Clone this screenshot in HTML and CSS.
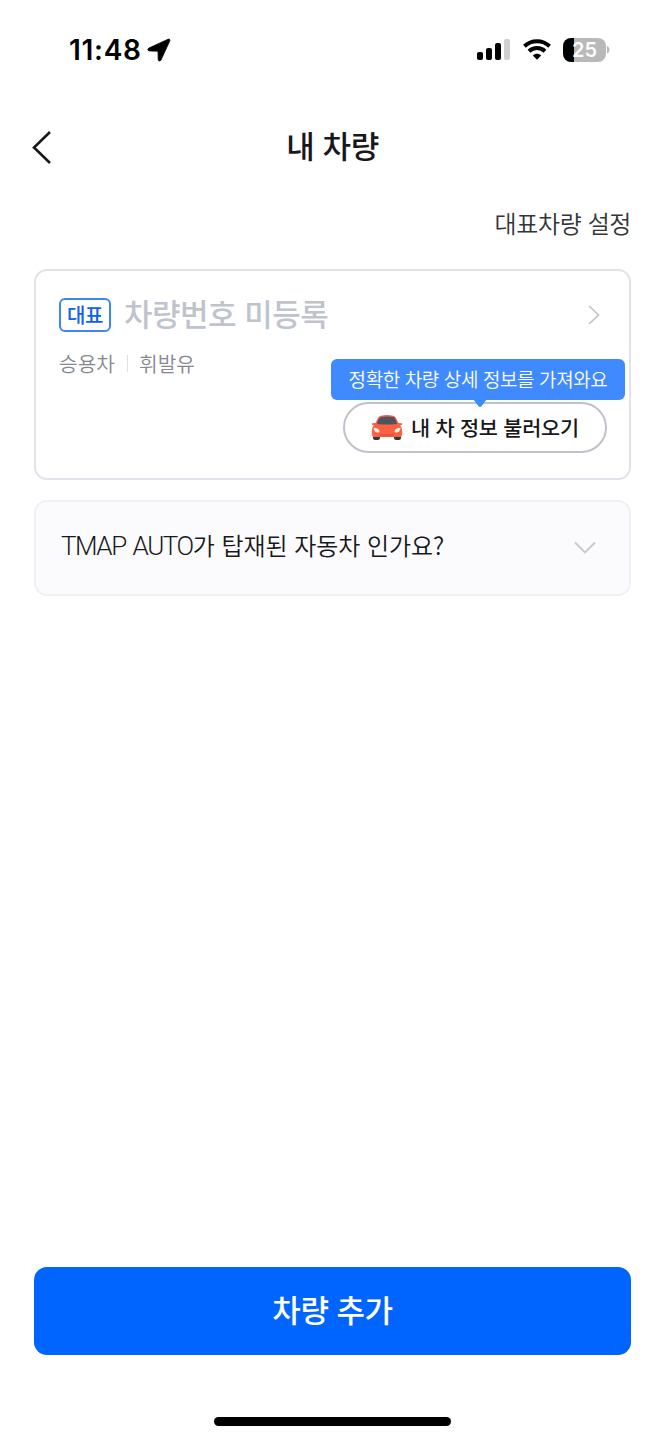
FILE: index.html
```html
<!DOCTYPE html>
<html lang="ko">
<head>
<meta charset="utf-8">
<title>내 차량</title>
<link rel="stylesheet" href="styles.css">
</head>
<body>
<div class="screen">
  <div class="status">
    <span class="time">11:48</span>
    <svg class="location" width="24" height="24" viewBox="0 0 24 24"><path d="M21.200 1.200 2 10c-1.800.9-1.300 2.800.4 2.900l8.600.3.2 8.300c.1 1.700 2 2.100 2.800.5L22.800 2.800c.5-1.100-.5-2.100-1.600-1.600z" stroke="#000" stroke-width=".8"/></svg>
    <div class="status-icons">
      <svg width="34" height="22" viewBox="0 0 34 22"><rect x="0" y="13" width="6" height="8" rx="2"/><rect x="9" y="9" width="6" height="12" rx="2"/><rect x="18" y="4" width="6" height="17" rx="2"/><rect x="27" y="0" width="6" height="21" rx="2" fill="#d0d0d0"/></svg>
      <svg class="wifi" width="28" height="22" viewBox="0 0 28 22"><g fill="none" stroke="#000" stroke-width="4"><path d="M1.400 7.200a18.300 18.300 0 0 1 25.200 0"/><path d="M6 12.200a11.700 11.700 0 0 1 16 0"/></g><path d="M9.800 16.400c2.400-2.100 6-2.100 8.400 0L14 20.800z"/></svg>
      <div class="battery"><span class="level">25</span></div>
      <svg class="cap" width="3" height="8" viewBox="0 0 3 8"><path d="M0 0c3.300 1 3.300 6.500 0 7.500z" fill="#b9b9b9"/></svg>
    </div>
  </div>
  <header class="header">
    <svg class="back" width="22" height="36" viewBox="0 0 22 36"><path d="M19 3 3 18.500 19 34" fill="none" stroke="#18181b" stroke-width="2.600"/></svg>
    <h1 class="title">내 차량</h1>
  </header>
  <div class="setting">대표차량 설정</div>
  <section class="card">
    <div class="row">
      <span class="badge">대표</span>
      <span class="plate">차량번호 미등록</span>
      <svg class="next" width="14" height="22" viewBox="0 0 14 22"><path d="m2 2 9.500 9L2 20" fill="none" stroke="#c0c4cb" stroke-width="1.700"/></svg>
    </div>
    <div class="meta"><span>승용차</span><i class="divider"></i><span>휘발유</span></div>
    <div class="load">
      <svg class="car" width="32" height="26" viewBox="0 0 32 26"><path d="M2 19h7v4q0 2-2 2H4q-2 0-2-2zm21 0h7v4q0 2-2 2h-3q-2 0-2-2z" fill="#36383d"/><path d="M4.500 8 7 3q1-2 3-2.300 6-1.200 12 0 2 .3 3 2.300l2.500 5 3 .2c1 .1 1 1.500 0 1.700l-1.300.4q2 2 2 6.700 0 5-2 5H2.800q-2 0-2-5 0-4.700 2-6.700l-1.300-.4c-1-.2-1-1.600 0-1.700z" fill="#fb6045"/><path d="M6 9q1.300-6 4-7 6-1.200 12 0 2.700 1 4 7-10 1-20 0z" fill="#50545c"/><path d="M2.500 12.800q5 .2 6 3.200.2 2-2.500 1.500-3-.5-3.500-4.700zm27 0q-5 .2-6 3.200-.2 2 2.500 1.500 3-.5 3.500-4.700z" fill="#fff3e6"/><path d="M8 18.500q8 1 16 0l-1.500 3h-13z" fill="#e95340"/></svg>
      <span class="load-text">내 차 정보 불러오기</span>
      <div class="tip">정확한 차량 상세 정보를 가져와요<svg class="arrow" width="14" height="9" viewBox="0 0 14 9"><path d="M0 0h14L8.500 7.300q-1.500 1.500-3 0z" fill="#3f8aff"/></svg></div>
    </div>
  </section>
  <section class="faq">
    <span class="question"><span class="latin">TMAP AUTO</span>가 탑재된 자동차 인가요?</span>
    <svg width="24" height="14" viewBox="0 0 24 14"><path d="m2 1.500 10 10 10-10" fill="none" stroke="#c5c9d0" stroke-width="1.900"/></svg>
  </section>
  <div class="add">차량 추가</div>
  <div class="home"></div>
</div>
</body>
</html>
```
FILE: styles.css
```css
* { box-sizing: border-box; }
body { margin: 0; background: #fff; font-family: "Noto Sans CJK KR", sans-serif; color: #18181b; white-space: nowrap; }
svg { display: block; flex: none; }
.screen { display: flex; flex-direction: column; height: 1440px; padding: 0 34px; }
.status { display: flex; align-items: center; height: 100px; padding-left: 35px; color: #000; }
.time { font: 600 28px/34px Inter, sans-serif; letter-spacing: .7px; }
.location { margin-left: 5px; }
.status-icons { display: flex; align-items: center; margin-left: auto; padding-right: 21px; }
.wifi { margin-left: 12px; }
.battery { width: 43px; height: 24px; margin-left: 12px; border-radius: 8px; background: linear-gradient(to right, #000 11px, #b9b9b9 11px); color: #fff; text-align: center; }
.level { font: 600 20px/24px Inter, sans-serif; }
.cap { margin-left: 1px; }
.header { display: grid; height: 94px; align-items: center; }
.back, .title { grid-area: 1 / 1; }
.back { margin-left: -3px; }
.title { margin: 0 0 5px; text-align: center; font-size: 31px; line-height: 44px; font-weight: 500; letter-spacing: -.4px; }
.setting { height: 75px; line-height: 57px; text-align: right; font-size: 24px; font-weight: 350; letter-spacing: -.4px; color: #333539; }
.card { height: 211px; border: 2px solid #e2e3e9; border-radius: 13px; padding: 26px 22px 0 23px; }
.row { display: flex; align-items: center; height: 36px; }
.badge { width: 52px; height: 34px; border: 2px solid #3d86f5; border-radius: 6px; color: #0e62ec; font-size: 20px; font-weight: 500; line-height: 29px; letter-spacing: -.3px; text-align: center; }
.plate { margin: -4px 0 0 13px; font-size: 31px; font-weight: 500; line-height: 36px; letter-spacing: -.5px; color: #bfc4cc; }
.next { margin-left: auto; margin-right: 6px; }
.meta { display: flex; align-items: center; height: 30px; margin-top: 15px; font-size: 20.300px; font-weight: 350; color: #85888f; }
.divider { width: 1px; height: 17px; margin: 0 11px 0 12px; background: #dddfe4; }
.load { position: relative; display: flex; align-items: center; width: 264px; height: 51px; margin: 24px 0 0 auto; padding-left: 26px; border: 2px solid #bfc2ca; border-radius: 26px; }
.load-text { margin: -2px 0 0 8px; font-size: 20.800px; font-weight: 500; line-height: 46px; letter-spacing: -.25px; }
.tip { position: absolute; right: -20px; bottom: 51px; width: 294px; height: 41px; border-radius: 6px; background: #3f8aff; color: #fff; text-align: center; font-size: 19px; font-weight: 350; line-height: 39px; letter-spacing: -.4px; }
.arrow { position: absolute; left: 142px; top: 40px; }
.faq { display: flex; align-items: center; justify-content: space-between; height: 96px; margin-top: 20px; padding: 0 32px 0 25px; border: 2px solid #f0f1f4; border-radius: 13px; background: #fbfbfe; }
.question { margin-top: -6px; font-size: 24px; font-weight: 350; line-height: 40px; letter-spacing: -.05px; }
.latin { font-family: Roboto, sans-serif; font-size: 26px; font-weight: 350; letter-spacing: -1.450px; word-spacing: 2px; }
.add { height: 88px; margin-top: auto; border-radius: 13px; background: #0064ff; color: #fff; text-align: center; font-size: 31px; font-weight: 500; line-height: 83px; letter-spacing: -.5px; }
.home { width: 237px; height: 9px; margin: 62px auto 14px; border-radius: 5px; background: #000; }
```
